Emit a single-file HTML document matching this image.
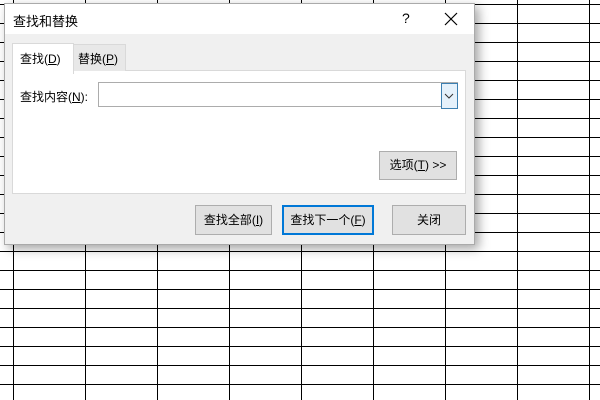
<!DOCTYPE html>
<html><head><meta charset="utf-8"><style>
body{margin:0;width:600px;height:400px;position:relative;overflow:hidden;background:#fff;font-family:"Liberation Sans","Noto Sans CJK SC",sans-serif;font-size:12px;color:#000}
.grid{position:absolute;left:0;top:0;width:600px;height:400px;
background-image:linear-gradient(to right,#000 1px,transparent 1px),linear-gradient(to bottom,#000 1px,transparent 1px);
background-size:72px 19px;background-position:13px 4px}
.dlg{position:absolute;left:4px;top:3px;width:469px;height:240px;background:#f0f0f0;border:1px solid #aaa;box-shadow:4px 4px 10px rgba(0,0,0,.35)}
.title{position:absolute;left:0;top:0;width:469px;height:30px;background:#fff}
.abs{position:absolute}
.btn{position:absolute;background:#e1e1e1;border:1px solid #adadad;text-align:center;box-sizing:border-box}
u{text-decoration:underline}
</style></head><body>
<div class="grid"></div>
<div class="dlg">
<div class="title"></div>
<div class="abs" style="left:8px;top:7px;font-size:13px">查找和替换</div>
<div class="abs" style="left:397px;top:6px;font-size:14px">?</div>
<svg class="abs" style="left:439px;top:8px" width="14" height="14"><path d="M1 1L13 13M13 1L1 13" stroke="#000" stroke-width="1.2"/></svg>
<div class="abs" style="left:7px;top:66px;width:452px;height:122px;background:#fff;border:1px solid #d9d9d9"></div>
<div class="abs" style="left:67px;top:40px;width:52px;height:26px;background:#e8e8e8;border:1px solid #d9d9d9;border-bottom:none"></div>
<div class="abs" style="left:73px;top:46px;font-size:12px">替换(<u>P</u>)</div>
<div class="abs" style="left:7px;top:39px;width:60px;height:30px;background:#fff;border:1px solid #d9d9d9;border-bottom:none"></div>
<div class="abs" style="left:15px;top:46px;font-size:12px">查找(<u>D</u>)</div>
<div class="abs" style="left:15px;top:84px">查找内容(<u>N</u>):</div>
<div class="abs" style="left:93px;top:78px;width:360px;height:25px;background:#fff;border:1px solid #acacac;box-sizing:border-box"></div>
<div class="abs" style="left:436px;top:79px;width:17px;height:26px;background:#e5f1fb;border:1px solid #3c7fb1;box-sizing:border-box"></div>
<svg class="abs" style="left:439px;top:89px" width="10" height="6"><path d="M1 1L5 5L9 1" stroke="#333" fill="none"/></svg>
<div class="btn" style="left:374px;top:147px;width:78px;height:29px;line-height:27px">选项(<u>T</u>) &gt;&gt;</div>
<div class="btn" style="left:190px;top:201px;width:77px;height:30px;line-height:28px">查找全部(<u>I</u>)</div>
<div class="btn" style="left:277px;top:201px;width:92px;height:30px;line-height:26px;border:2px solid #0078d7">查找下一个(<u>F</u>)</div>
<div class="btn" style="left:387px;top:201px;width:74px;height:30px;line-height:28px">关闭</div>
</div>
</body></html>
